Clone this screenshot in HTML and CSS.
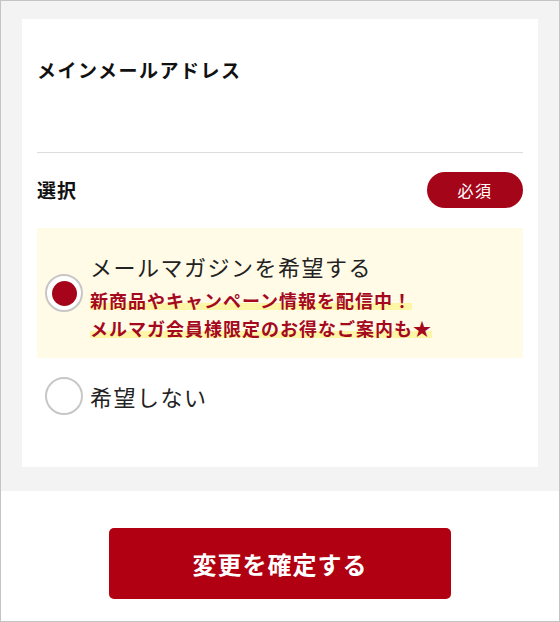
FILE: index.html
```html
<!DOCTYPE html>
<html lang="ja">
<head>
<meta charset="utf-8">
<title>メールマガジン設定</title>
<link rel="stylesheet" href="styles.css">
</head>
<body>
<div class="page">
  <section class="panel">
    <div class="card">
      <h2 class="field-title">メインメールアドレス</h2>
      <div class="field-value"></div>
      <hr class="divider">
      <div class="select-head">
        <h3 class="select-title">選択</h3>
        <span class="badge">必須</span>
      </div>
      <label class="option option-selected">
        <span class="radio radio-on"><span class="dot"></span></span>
        <span class="option-text">
          <span class="option-label">メールマガジンを希望する</span>
          <span class="promo"><span class="mark">新商品やキャンペーン情報を配信中！</span><br><span class="mark">メルマガ会員様限定のお得なご案内も★</span></span>
        </span>
      </label>
      <label class="option option-plain">
        <span class="radio"></span>
        <span class="option-text">
          <span class="option-label">希望しない</span>
        </span>
      </label>
    </div>
  </section>
  <div class="actions">
    <button class="submit" type="button">変更を確定する</button>
  </div>
</div>
</body>
</html>
```
FILE: styles.css
```css
* { box-sizing: border-box; }
html, body { margin: 0; padding: 0; background: #fff; }
body {
  font-family: "Noto Sans CJK JP", "Noto Sans", sans-serif;
  color: #222;
}
.page {
  width: 560px;
  height: 622px;
  border: 1px solid #c4c4c4;
  background: #fff;
}
.panel {
  background: #f3f3f3;
  padding: 18px 21px 24px;
}
.card {
  background: #fff;
  padding: 38px 15px 52px;
}
.field-title {
  margin: 0;
  font-size: 19px;
  line-height: 26px;
  font-weight: 700;
  letter-spacing: 1.5px;
  color: #111;
}
.field-value {
  height: 69px;
}
.divider {
  margin: 0;
  border: 0;
  border-top: 1px solid #dcdcdc;
}
.select-head {
  margin-top: 19px;
  display: flex;
  align-items: center;
  justify-content: space-between;
  height: 36px;
}
.select-title {
  margin: 0;
  font-size: 19px;
  line-height: 26px;
  font-weight: 700;
  letter-spacing: 1px;
  color: #111;
}
.badge {
  width: 96px;
  height: 36px;
  border-radius: 18px;
  background: #a50519;
  color: #fff;
  font-size: 16px;
  letter-spacing: 1.5px;
  display: flex;
  align-items: center;
  justify-content: center;
}
.option {
  display: flex;
  align-items: center;
  gap: 7px;
  padding-left: 8px;
}
.option-selected {
  margin-top: 20px;
  background: #fffbe7;
  padding-top: 23px;
  padding-bottom: 16px;
}
.option-plain {
  margin-top: 19px;
}
.radio {
  flex: none;
  width: 38px;
  height: 38px;
  border-radius: 50%;
  border: 2px solid #c9c6c6;
  background: #fff;
  display: flex;
  align-items: center;
  justify-content: center;
}
.option-selected .radio {
  margin-bottom: 7px;
}
.dot {
  width: 25px;
  height: 25px;
  border-radius: 50%;
  background: #a5041a;
}
.option-text {
  display: flex;
  flex-direction: column;
}
.option-label {
  font-size: 22px;
  line-height: 30px;
  letter-spacing: 1.5px;
  color: #222;
}
.promo {
  margin-top: 5px;
  font-size: 18px;
  line-height: 28px;
  font-weight: 700;
  letter-spacing: 1px;
  color: #a5091e;
}
.mark {
  background: linear-gradient(transparent 60%, #fdf6a6 60%, #fdf6a6 88%, transparent 88%);
}
.actions {
  padding-top: 37px;
  display: flex;
  justify-content: center;
}
.submit {
  width: 342px;
  height: 71px;
  border: 0;
  border-radius: 5px;
  background: #b10012;
  color: #fff;
  font-family: "Noto Sans CJK JP", "Noto Sans", sans-serif;
  font-size: 24px;
  font-weight: 700;
  letter-spacing: 1px;
  cursor: pointer;
}
```
